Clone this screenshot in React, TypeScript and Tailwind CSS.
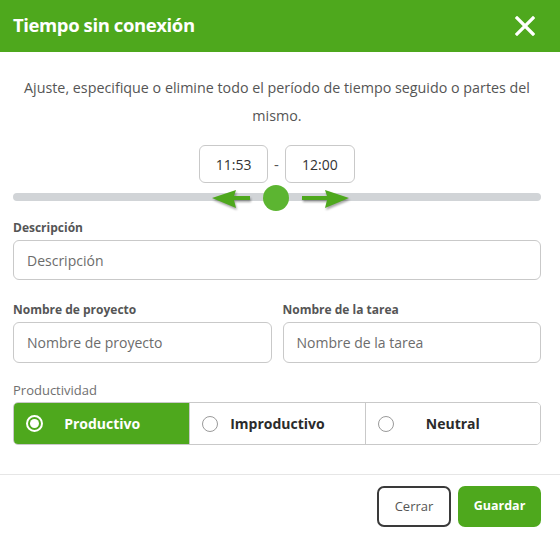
import React from 'react';

const font = { fontFamily: '"Open Sans", "Noto Sans", sans-serif' };

const options = [
  { id: 'prod', label: 'Productivo', active: true },
  { id: 'improd', label: 'Improductivo', active: false },
  { id: 'neutral', label: 'Neutral', active: false },
];

function CloseIcon() {
  return (
    <svg width="20" height="20" viewBox="0 0 20 20" fill="none">
      <path d="M2 2 L18 18 M18 2 L2 18" stroke="#fff" strokeWidth="3.2" strokeLinecap="square" />
    </svg>
  );
}

function Slider() {
  return (
    <div className="relative mt-[2px] h-[26px] w-full">
      <div className="absolute left-0 right-0 top-[8px] h-[8px] rounded-full bg-[#d1d4d7]" />
      <svg
        className="absolute left-0 top-0 h-[26px] w-full overflow-visible drop-shadow-[1px_2px_1px_rgba(0,0,0,0.35)]"
        viewBox="0 0 528 26"
      >
        <polygon points="199,13 223,5 221,11 237,11 237,15 221,15 223,23" fill="#4ea81d" />
        <polygon points="289,11 314,11 312,5 336,13 312,23 314,15 289,15" fill="#4ea81d" />
      </svg>
      <div className="absolute left-[250px] top-0 h-[26px] w-[26px] rounded-full bg-[#5cb531]" />
    </div>
  );
}

function Field({ label, placeholder, h }: { label: string; placeholder: string; h: string }) {
  return (
    <div>
      <div className="text-[12px] font-bold leading-[18px] text-[#555]">{label}</div>
      <div
        className={`mt-[3px] flex ${h} items-center rounded-[6px] border border-[#c9c9c9] px-[13px] text-[14px] text-[#6c6c6c]`}
      >
        {placeholder}
      </div>
    </div>
  );
}

export default function App() {
  return (
    <div className="h-[538px] w-[560px] bg-white" style={font}>
      <div className="flex h-[52px] items-center justify-between bg-[#4ea81d] pl-[13px] pr-[25px]">
        <h1 className="mb-[3px] text-[18.5px] font-bold tracking-[-0.4px] text-white">Tiempo sin conexión</h1>
        <CloseIcon />
      </div>

      <div className="pl-[13px] pr-[19px]">
        <p className="mt-[22px] text-center text-[14.3px] leading-[28px] text-[#555]">
          Ajuste, especifique o elimine todo el período de tiempo seguido o partes del mismo.
        </p>

        <div className="mt-[15px] flex items-center justify-center gap-[6px]">
          <div className="flex h-[38px] w-[69px] items-center justify-center rounded-[6px] border border-[#c9c9c9] text-[14px] text-[#333]">
            11:53
          </div>
          <span className="text-[15px] text-[#555]">-</span>
          <div className="flex h-[38px] w-[70px] items-center justify-center rounded-[6px] border border-[#c9c9c9] text-[14px] text-[#333]">
            12:00
          </div>
        </div>

        <Slider />

        <div className="mt-[8px]">
          <Field label="Descripción" placeholder="Descripción" h="h-[40px]" />
        </div>

        <div className="mt-[21px] grid grid-cols-2 gap-[11px]">
          <Field label="Nombre de proyecto" placeholder="Nombre de proyecto" h="h-[41px]" />
          <Field label="Nombre de la tarea" placeholder="Nombre de la tarea" h="h-[41px]" />
        </div>

        <div className="mt-[18px] text-[13px] leading-[18px] text-[#6f6f6f]">Productividad</div>
        <div className="mt-[3px] grid h-[43px] grid-cols-3 overflow-hidden rounded-[5px] border border-[#c9c9c9]">
          {options.map((o, i) => (
            <div
              key={o.id}
              className={
                o.active
                  ? 'flex items-center bg-[#4ea81d] pl-[12px] pr-[28px]'
                  : `flex items-center bg-white pl-[12px] pr-[28px] ${i > 0 ? 'border-l border-[#c9c9c9]' : ''}`
              }
            >
              {o.active ? (
                <span className="flex h-[17px] w-[17px] items-center justify-center rounded-full border-2 border-white">
                  <span className="h-[9px] w-[9px] rounded-full bg-white" />
                </span>
              ) : (
                <span className="h-[16px] w-[16px] rounded-full border border-[#9a9a9a] bg-white" />
              )}
              <span
                className={`flex-1 text-center text-[14px] font-bold ${o.active ? 'text-white' : 'text-[#2b2b2b]'}`}
              >
                {o.label}
              </span>
            </div>
          ))}
        </div>
      </div>

      <div className="mt-[29px] border-t border-[#e6e6e6]" />

      <div className="mt-[11px] flex justify-end gap-[7px] pr-[19px]">
        <button className="h-[41px] w-[74px] rounded-[7px] border-2 border-[#3a3a3a] text-[13px] text-[#555]">
          Cerrar
        </button>
        <button className="h-[41px] w-[83px] rounded-[7px] bg-[#4ea81d] text-[12.5px] font-bold text-white">
          Guardar
        </button>
      </div>
    </div>
  );
}
